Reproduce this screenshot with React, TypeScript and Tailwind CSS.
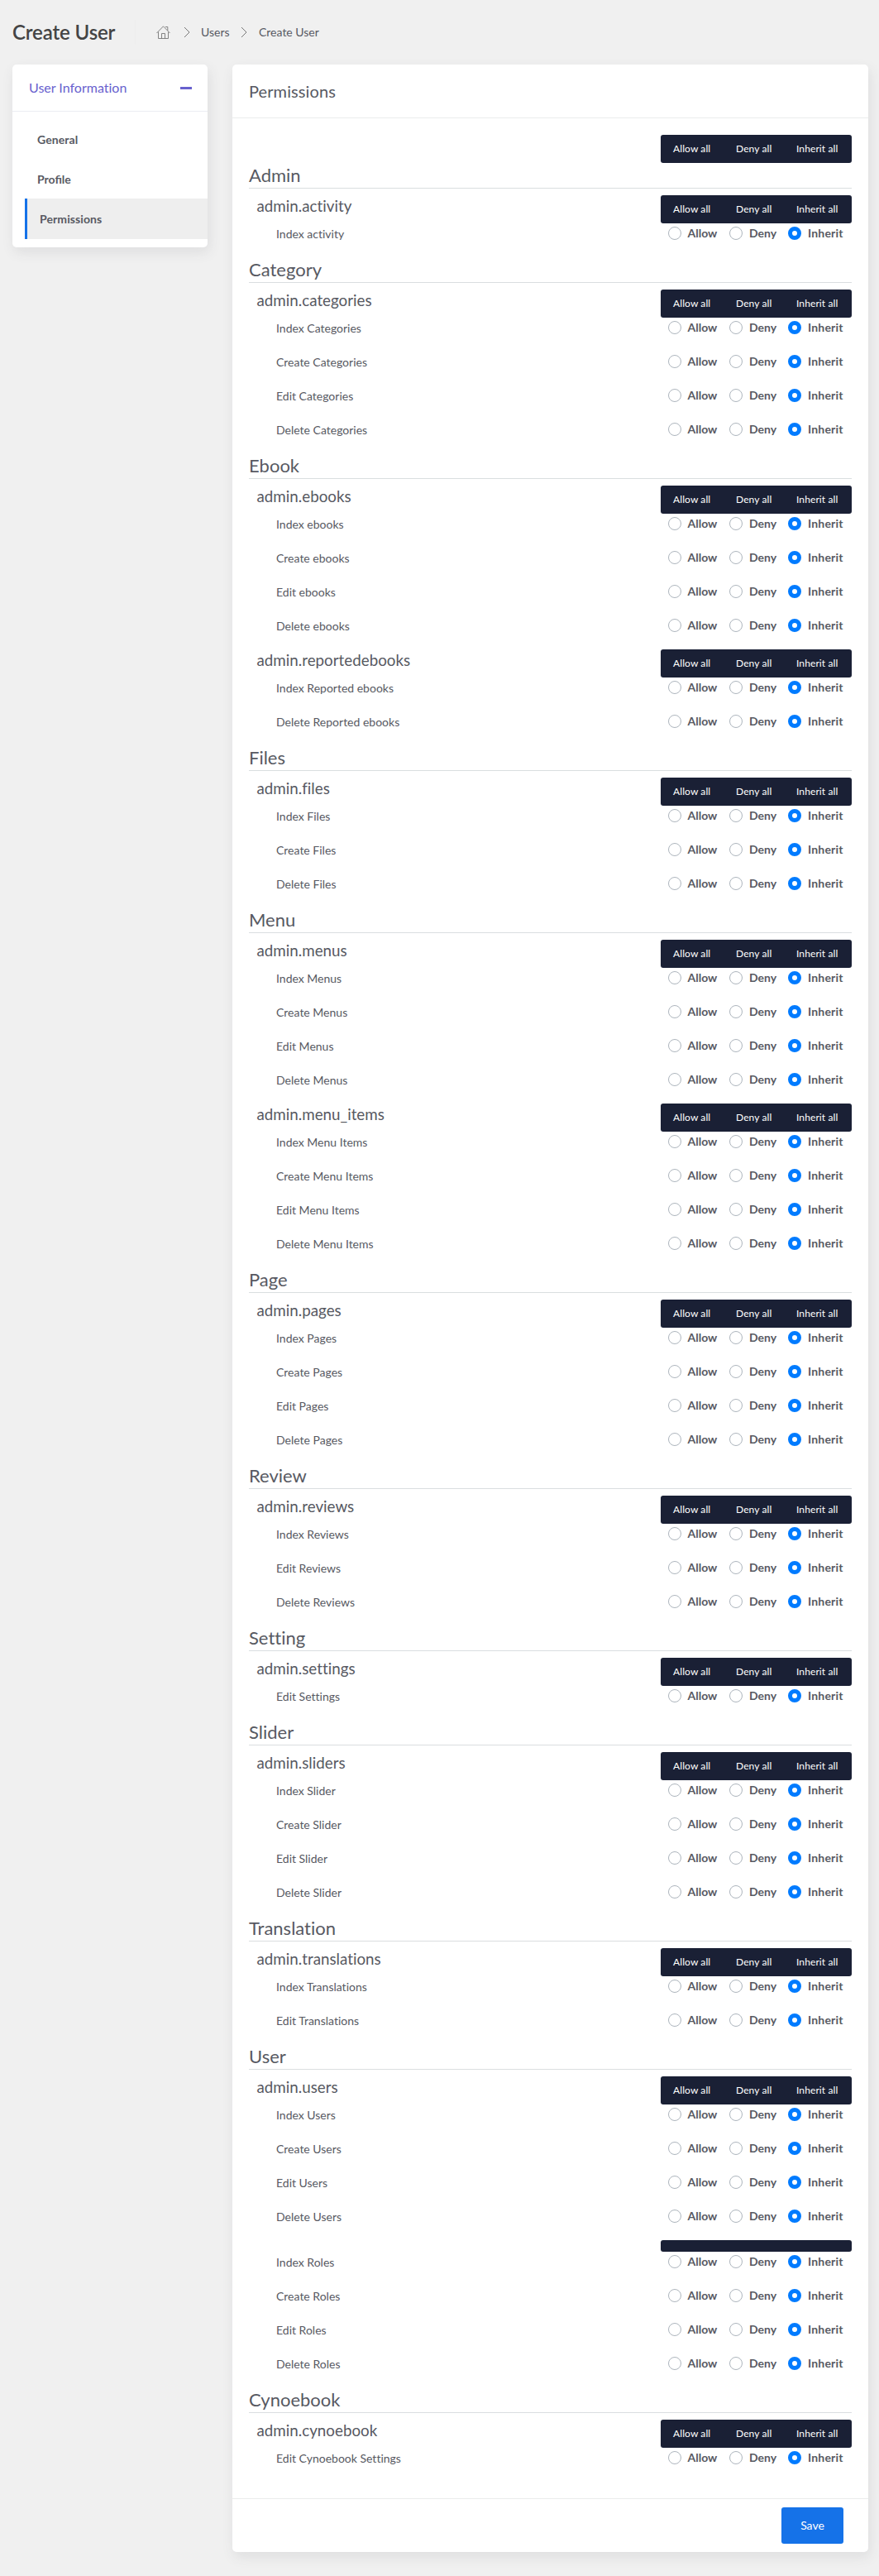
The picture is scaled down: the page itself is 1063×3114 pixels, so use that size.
const sections: { title: string; groups: { name: string; items: string[] }[] }[] = [
  { title: "Admin", groups: [{ name: "admin.activity", items: ["Index activity"] }] },
  {
    title: "Category",
    groups: [{ name: "admin.categories", items: ["Index Categories", "Create Categories", "Edit Categories", "Delete Categories"] }],
  },
  {
    title: "Ebook",
    groups: [
      { name: "admin.ebooks", items: ["Index ebooks", "Create ebooks", "Edit ebooks", "Delete ebooks"] },
      { name: "admin.reportedebooks", items: ["Index Reported ebooks", "Delete Reported ebooks"] },
    ],
  },
  { title: "Files", groups: [{ name: "admin.files", items: ["Index Files", "Create Files", "Delete Files"] }] },
  {
    title: "Menu",
    groups: [
      { name: "admin.menus", items: ["Index Menus", "Create Menus", "Edit Menus", "Delete Menus"] },
      { name: "admin.menu_items", items: ["Index Menu Items", "Create Menu Items", "Edit Menu Items", "Delete Menu Items"] },
    ],
  },
  { title: "Page", groups: [{ name: "admin.pages", items: ["Index Pages", "Create Pages", "Edit Pages", "Delete Pages"] }] },
  { title: "Review", groups: [{ name: "admin.reviews", items: ["Index Reviews", "Edit Reviews", "Delete Reviews"] }] },
  { title: "Setting", groups: [{ name: "admin.settings", items: ["Edit Settings"] }] },
  { title: "Slider", groups: [{ name: "admin.sliders", items: ["Index Slider", "Create Slider", "Edit Slider", "Delete Slider"] }] },
  { title: "Translation", groups: [{ name: "admin.translations", items: ["Index Translations", "Edit Translations"] }] },
  {
    title: "User",
    groups: [
      { name: "admin.users", items: ["Index Users", "Create Users", "Edit Users", "Delete Users"] },
      { name: "", items: ["Index Roles", "Create Roles", "Edit Roles", "Delete Roles"] },
    ],
  },
  { title: "Cynoebook", groups: [{ name: "admin.cynoebook", items: ["Edit Cynoebook Settings"] }] },
];

function BulkActions() {
  return (
    <div className="flex h-[34px] w-[231px] shrink-0 rounded-[3px] bg-[#1a2035] text-xs leading-[34px] tracking-[0.1px] whitespace-nowrap text-white">
      <button className="w-[76px] pl-[15px] text-left">Allow all</button>
      <button className="w-[74px] pl-[15px] text-left">Deny all</button>
      <button className="w-[81px] pl-[14px] text-left">Inherit all</button>
    </div>
  );
}

function Radio({ checked = false }: { checked?: boolean }) {
  return checked ? (
    <span className="size-4 shrink-0 rounded-full border-5 border-[#007bff] bg-white" />
  ) : (
    <span className="size-4 shrink-0 rounded-full border border-[#adb5bd] bg-white" />
  );
}

function PermissionRow({ label }: { label: string }) {
  return (
    <div className="flex h-[41px] items-start justify-between pl-[33px]">
      <span className="pt-[2px] text-sm leading-[21px]">{label}</span>
      <div className="flex w-[231px] items-center pt-[2px] pl-[9px] text-sm leading-5 font-bold">
        <label className="flex w-[74px] items-center gap-[7.5px]">
          <Radio />
          Allow
        </label>
        <label className="flex w-[71px] items-center gap-2">
          <Radio />
          Deny
        </label>
        <label className="flex items-center gap-2 tracking-[0.2px]">
          <Radio checked />
          Inherit
        </label>
      </div>
    </div>
  );
}

function Chevron() {
  return (
    <svg className="h-[14px] w-2" viewBox="0 0 8 14" fill="none" stroke="#777" strokeWidth="1">
      <path d="M1 1 L7 7 L1 13" />
    </svg>
  );
}

export default function App() {
  return (
    <div className="min-h-[3114px] w-[1063px] bg-[#f0f0f0] font-[Lato,sans-serif] text-[#575962] [font-variant-ligatures:none]">
      <header className="flex h-[78px] items-center pl-[15px]">
        <h1 className="w-[148px] text-2xl leading-[30px] font-semibold tracking-[-0.12px] whitespace-nowrap text-[#444]">Create User</h1>
        <div className="h-[30px] w-px bg-[#ededed]" />
        <nav className="flex items-center pl-[25px] text-sm whitespace-nowrap">
          <svg className="h-[17px] w-[17px]" viewBox="0 0 17 17" fill="none" stroke="#777" strokeWidth="0.9">
            <path d="M0.5 9 L8.5 0.8 L16.5 9 M2.5 7.5 V15.5 H14.5 V7.5 M6.5 15.5 V9.5 H10.5 V15.5 M11 1.5 H13.8 V6" />
          </svg>
          <span className="flex w-[37px] justify-center pl-0.5"><Chevron /></span>
          <span className="w-8">Users</span>
          <span className="flex w-[38px] justify-center pl-0.5"><Chevron /></span>
          <span>Create User</span>
        </nav>
      </header>

      <main className="flex items-start gap-[30px] pl-[15px]">
        <aside className="h-[221px] w-[236px] rounded-[5px] bg-white shadow-[2px_6px_15px_0_rgba(69,65,78,0.1)]">
          <div className="flex h-[57px] items-center justify-between border-b border-[#ebedf2] pr-[19px] pl-5 text-base text-[#6861ce]">
            <span>User Information</span>
            <span className="h-[3px] w-[14px] bg-[#6861ce]" />
          </div>
          <ul className="pt-[9px] pl-[15px] text-sm leading-[50px] font-bold">
            <li className="h-12 pl-[15px] tracking-[0.1px]">General</li>
            <li className="h-12 pl-[15px] [font-variant-ligatures:normal]">Profile</li>
            <li className="h-[49px] border-l-3 border-[#1572e8] bg-[#eee] pl-[15px] tracking-[0.1px]">Permissions</li>
          </ul>
        </aside>

        <section className="w-[769px] rounded-[5px] bg-white shadow-[2px_6px_15px_0_rgba(69,65,78,0.1)]">
          <h2 className="h-[65px] border-b border-[#ebecec] pl-5 text-xl leading-[64px] tracking-[0.1px]">Permissions</h2>
          <div className="p-5">
            <div className="flex justify-end">
              <BulkActions />
            </div>
            {sections.map((section) => (
              <div key={section.title}>
                <h3 className="mb-2 h-[31px] border-b border-[#dadee0] text-[22px] leading-[29px]">{section.title}</h3>
                {section.groups.map((group) => (
                  <div key={group.name}>
                    {group.name ? (
                      <div className="flex h-[34px] justify-between pl-[9.5px]">
                        <h4 className="text-[18.8px] leading-[26px]">{group.name}</h4>
                        <BulkActions />
                      </div>
                    ) : (
                      <div className="flex justify-end">
                        <div className="h-[14px] w-[231px] rounded-[3px] bg-[#1a2035]" />
                      </div>
                    )}
                    {group.items.map((item) => (
                      <PermissionRow key={item} label={item} />
                    ))}
                  </div>
                ))}
              </div>
            ))}
          </div>
          <footer className="flex h-[65px] items-center justify-end border-t border-[#ebecec] pr-[30px]">
            <button className="h-11 w-[75px] rounded-[3px] bg-[#1572e8] text-sm text-white">Save</button>
          </footer>
        </section>
      </main>
    </div>
  );
}
